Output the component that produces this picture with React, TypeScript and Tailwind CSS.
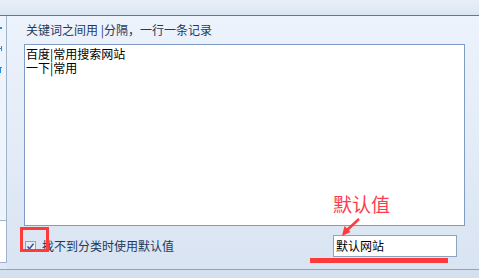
import React from 'react';

const cjk = '"Noto Sans CJK SC", "Liberation Sans", sans-serif';

export default function App() {
  return (
    <div
      className="relative w-[479px] h-[278px] overflow-hidden flex flex-col bg-[#dfe8f4] text-[12px]"
      style={{ fontFamily: cjk }}
    >
      {/* top bar */}
      <div className="h-[16px] bg-gradient-to-b from-[#e9eff8] to-[#dbe5f2] border-b border-[#5f7896]" />

      {/* middle */}
      <div className="flex h-[253px]">
        {/* left side panel, mostly cut off */}
        <div className="w-[7px] flex flex-col">
          <div className="h-[204px] bg-[#eef4fc] border-r border-[#9fb3cc] relative overflow-hidden">
            <span className="absolute left-0 top-[11px] w-[2px] h-[2px] bg-[#2a8ae0]" />
            <span className="absolute left-0 top-[32px] w-[2px] h-[1px] bg-[#2a8ae0]" />
            <span className="absolute left-[1px] top-[30px] w-[1px] h-[5px] bg-[#2a8ae0]" />
            <span className="absolute left-0 top-[51px] w-[2px] h-[6px] border-l border-t border-[#2a8ae0]" />
          </div>
          <div className="h-[43px] bg-white border-t border-r border-b border-[#9fb3cc]" />
          <div className="flex-1" />
        </div>

        {/* main area */}
        <div className="flex-1 bg-gradient-to-b from-[#edf3fc] to-[#d9e4f2] pl-[17px] pr-[14px] pt-[6px]">
          <div className="h-[16px] leading-[16px] pl-[2px] text-[#1e395b] mb-[6px]">
            关键词之间用 |分隔，一行一条记录
          </div>
          <div className="h-[182px] bg-white border border-[#7f9cc2] px-[1px] pt-[2px] text-black leading-[14px]">
            <div>百度|常用搜索网站</div>
            <div>一下|常用</div>
          </div>
          <div className="flex items-center mt-[9px] h-[22px]">
            <div className="ml-[1px] w-[11px] h-[11px] border border-[#8fa3bd] bg-gradient-to-br from-[#dfe5ee] to-[#f6f8fb] flex items-center justify-center">
              <svg width="9" height="9" viewBox="0 0 9 9">
                <path d="M1.5 4.5 L3.5 6.8 L7.5 1.8" fill="none" stroke="#3a5a94" strokeWidth="1.6" />
              </svg>
            </div>
            <span className="ml-[6px] text-[#1e395b]">找不到分类时使用默认值</span>
            <div className="ml-auto mr-[8px] w-[124px] h-[22px] bg-white border border-[#8ea3bf] px-[2px] leading-[20px] text-black">
              默认网站
            </div>
          </div>
        </div>
      </div>

      {/* bottom bar */}
      <div className="flex-1 border-t border-[#8ea3bf] bg-[#d4dff0]" />

      {/* annotations */}
      <div className="absolute left-[20px] top-[227px] w-[29px] h-[25px] border-[3px] border-[#ff3a3a]" />
      <div className="absolute left-[310px] top-[258px] w-[138px] h-[5px] bg-[#ff3a3a]" />
      <div className="absolute left-[333px] top-[193px] text-[19px] leading-[22px] text-[#ff3b4e]">默认值</div>
      <svg className="absolute left-[336px] top-[214px]" width="30" height="26" viewBox="0 0 30 26">
        <path d="M23 5 L10 17" stroke="#ff3a3a" strokeWidth="2.5" fill="none" />
        <path d="M6 22 L8.5 12 L14.5 18 Z" fill="#ff3a3a" />
      </svg>
    </div>
  );
}
